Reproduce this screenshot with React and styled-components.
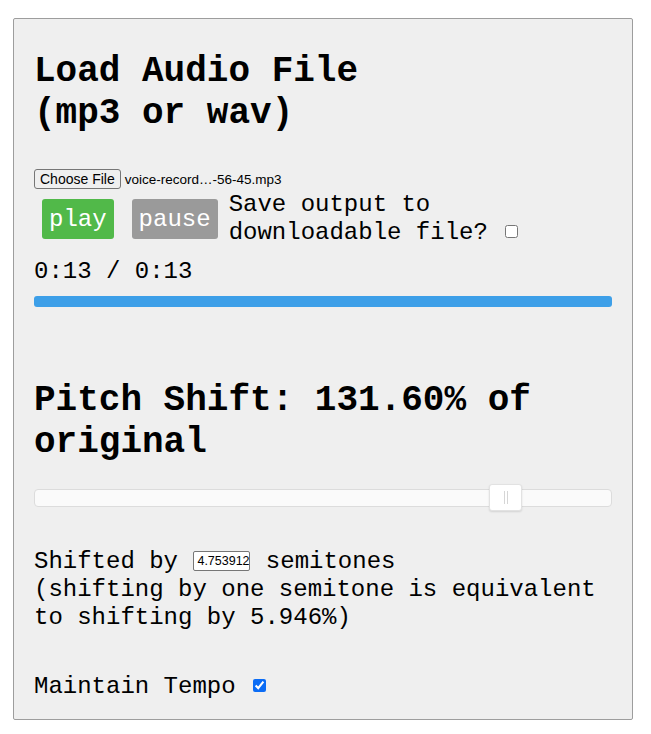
import React from "react";
import styled, { createGlobalStyle } from "styled-components";

const GlobalStyle = createGlobalStyle`
  body {
    margin: 0;
    background: #ffffff;
    font-family: "Liberation Mono", "Courier New", monospace;
    color: #000;
  }
`;

const Panel = styled.div`
  box-sizing: border-box;
  width: 620px;
  margin: 18px 0 0 13px;
  padding: 32px 20px 18px 20px;
  background: #efefef;
  border: 1px solid #9d9d9d;
  border-radius: 2px;
`;

const Heading = styled.h1`
  margin: ${(p) => p.$top || 0}px 0 0;
  font-family: "Liberation Mono", "Courier New", monospace;
  font-size: 36px;
  line-height: 42px;
  font-weight: bold;
`;

const Text = styled.div`
  margin-top: ${(p) => p.$top || 0}px;
  font-size: 24px;
  line-height: 28px;
`;

const FileRow = styled.div`
  display: flex;
  align-items: center;
  gap: 4px;
  margin-top: 34px;
  height: 20px;
  font-family: "Liberation Sans", Arial, sans-serif;
`;

const FileButton = styled.button`
  box-sizing: border-box;
  height: 20px;
  padding: 0 5px;
  font-family: "Liberation Sans", Arial, sans-serif;
  font-size: 14px;
  line-height: 16px;
  color: #000;
  background: #efefef;
  border: 1px solid #767676;
  border-radius: 3px;
`;

const FileName = styled.span`
  font-size: 13.5px;
  color: #000;
`;

const Controls = styled.div`
  display: flex;
  align-items: center;
  margin-top: 2px;
`;

const ActionButton = styled.button`
  box-sizing: border-box;
  height: 40px;
  margin-left: ${(p) => p.$left}px;
  padding: 0 7px;
  font-family: "Liberation Mono", "Courier New", monospace;
  font-size: 24px;
  color: #fff;
  background: ${(p) => p.$bg};
  border: none;
  border-radius: 3px;
`;

const SaveLabel = styled.label`
  margin-left: 11px;
  font-size: 24px;
  line-height: 28px;
`;

const Check = styled.input`
  width: 13px;
  height: 13px;
  margin: 0 0 0 3px;
  vertical-align: 1px;
  accent-color: #0b6cf5;
`;

const Progress = styled.div`
  margin-top: 10px;
  height: 11px;
  background: #3d9fe8;
  border-radius: 3px;
`;

const Range = styled.input`
  display: block;
  width: 100%;
  height: 27px;
  margin: 20px 0 0;
  background: transparent;
  -webkit-appearance: none;
  appearance: none;

  &::-webkit-slider-runnable-track {
    box-sizing: border-box;
    height: 18px;
    background: #fafafa;
    border: 1px solid #dcdcdc;
    border-radius: 4px;
  }
  &::-webkit-slider-thumb {
    -webkit-appearance: none;
    box-sizing: border-box;
    width: 33px;
    height: 27px;
    margin-top: -6px;
    border: 1px solid #e2e2e2;
    border-radius: 3px;
    box-shadow: 0 1px 2px rgba(0, 0, 0, 0.12);
    background:
      linear-gradient(
        to right,
        transparent 14px,
        #d6d6d6 14px,
        #d6d6d6 15px,
        transparent 15px,
        transparent 17px,
        #d6d6d6 17px,
        #d6d6d6 18px,
        transparent 18px
      ) center / 100% 13px no-repeat,
      #ffffff;
  }
`;

const NumberBox = styled.input`
  box-sizing: border-box;
  width: 57px;
  height: 20px;
  padding: 0 0 0 3px;
  margin: 0 1px;
  vertical-align: 3px;
  font-family: "Liberation Sans", Arial, sans-serif;
  font-size: 12.5px;
  color: #000;
  background: #fff;
  border: 1px solid #767676;
  border-radius: 2px;
`;

export default function App() {
  return (
    <>
      <GlobalStyle />
      <Panel>
        <Heading>
          Load Audio File
          <br />
          (mp3 or wav)
        </Heading>
        <FileRow>
          <FileButton>Choose File</FileButton>
          <FileName>voice-record…-56-45.mp3</FileName>
        </FileRow>
        <Controls>
          <ActionButton $left={8} $bg="#51b949">
            play
          </ActionButton>
          <ActionButton $left={18} $bg="#9a9a9a">
            pause
          </ActionButton>
          <SaveLabel>
            Save output to downloadable file?{" "}
            <Check type="checkbox" />
          </SaveLabel>
        </Controls>
        <Text $top={11}>0:13 / 0:13</Text>
        <Progress />
        <Heading $top={73}>Pitch Shift: 131.60% of original</Heading>
        <Range type="range" min="0" max="1000" defaultValue="837" />
        <Text $top={37}>
          Shifted by <NumberBox type="text" defaultValue="4.7539125" /> semitones
          <br />
          (shifting by one semitone is equivalent to shifting by 5.946%)
        </Text>
        <Text $top={41}>
          Maintain Tempo{" "}
          <Check type="checkbox" defaultChecked />
        </Text>
      </Panel>
    </>
  );
}
